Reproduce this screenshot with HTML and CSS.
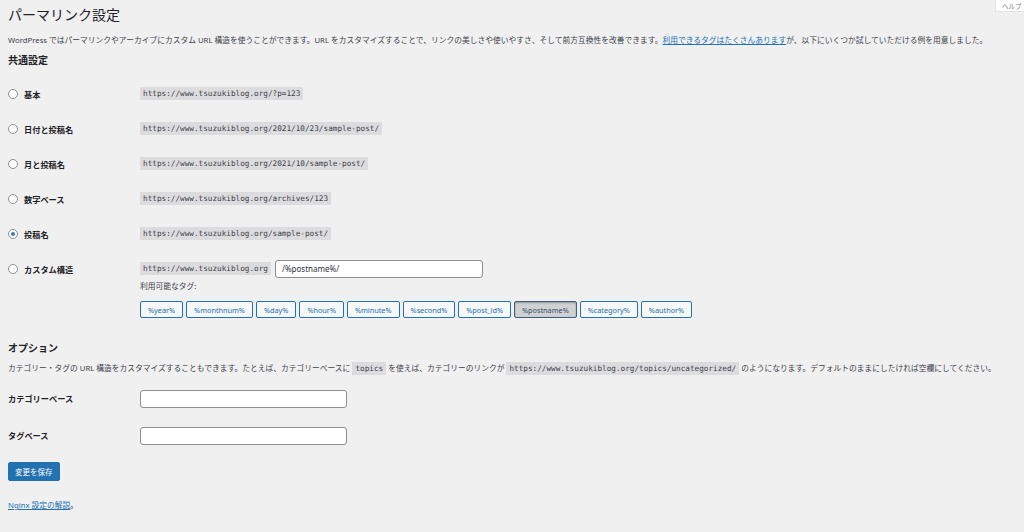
FILE: index.html
```
<!DOCTYPE html>
<html lang="ja">
<head>
    <meta charset="UTF-8">
    <meta name="viewport" content="width=device-width, initial-scale=1.0">
    <title>パーマリンク設定</title>
    <link rel="stylesheet" href="styles.css">
</head>
<body>
    <div id="screen-meta-links">
        <button class="help-tab">ヘルプ</button>
    </div>
    <div class="wrap">
        <h1>パーマリンク設定</h1>
        <p class="intro">WordPress ではパーマリンクやアーカイブにカスタム URL 構造を使うことができます。URL をカスタマイズすることで、リンクの美しさや使いやすさ、そして前方互換性を改善できます。<a href="#">利用できるタグはたくさんあります</a>が、以下にいくつか試していただける例を用意しました。</p>

        <h2>共通設定</h2>
        <div class="form-table">
            <div class="row">
                <label class="choice"><span class="radio"></span>基本</label>
                <div class="field"><code>https://www.tsuzukiblog.org/?p=123</code></div>
            </div>
            <div class="row">
                <label class="choice"><span class="radio"></span>日付と投稿名</label>
                <div class="field"><code>https://www.tsuzukiblog.org/2021/10/23/sample-post/</code></div>
            </div>
            <div class="row">
                <label class="choice"><span class="radio"></span>月と投稿名</label>
                <div class="field"><code>https://www.tsuzukiblog.org/2021/10/sample-post/</code></div>
            </div>
            <div class="row">
                <label class="choice"><span class="radio"></span>数字ベース</label>
                <div class="field"><code>https://www.tsuzukiblog.org/archives/123</code></div>
            </div>
            <div class="row">
                <label class="choice"><span class="radio checked"></span>投稿名</label>
                <div class="field"><code>https://www.tsuzukiblog.org/sample-post/</code></div>
            </div>
            <div class="row">
                <label class="choice"><span class="radio"></span>カスタム構造</label>
                <div class="field">
                    <div class="custom-line">
                        <code>https://www.tsuzukiblog.org</code>
                        <input type="text" class="structure" value="/%postname%/">
                    </div>
                    <p class="tags-label">利用可能なタグ:</p>
                    <ul class="available-tags">
                        <li><button class="tag">%year%</button></li>
                        <li><button class="tag">%monthnum%</button></li>
                        <li><button class="tag">%day%</button></li>
                        <li><button class="tag">%hour%</button></li>
                        <li><button class="tag">%minute%</button></li>
                        <li><button class="tag">%second%</button></li>
                        <li><button class="tag">%post_id%</button></li>
                        <li><button class="tag active">%postname%</button></li>
                        <li><button class="tag">%category%</button></li>
                        <li><button class="tag">%author%</button></li>
                    </ul>
                </div>
            </div>
        </div>

        <h2 class="options-title">オプション</h2>
        <p class="intro options-intro">カテゴリー・タグの URL 構造をカスタマイズすることもできます。たとえば、カテゴリーベースに <code>topics</code> を使えば、カテゴリーのリンクが <code>https://www.tsuzukiblog.org/topics/uncategorized/</code> のようになります。デフォルトのままにしたければ空欄にしてください。</p>
        <div class="form-table options">
            <div class="row">
                <label class="option-label">カテゴリーベース</label>
                <div class="field"><input type="text" class="regular-text"></div>
            </div>
            <div class="row">
                <label class="option-label">タグベース</label>
                <div class="field"><input type="text" class="regular-text"></div>
            </div>
        </div>

        <p class="submit"><button class="button-primary">変更を保存</button></p>
        <p class="nginx"><a href="#">Nginx 設定の解説</a>。</p>
    </div>
</body>
</html>
```

FILE: styles.css
```
body {
    margin: 0;
    background: #f0f0f1;
    color: #3c434a;
    font-family: "Noto Sans", "Noto Sans CJK JP", sans-serif;
    font-size: 7.75px;
}

a {
    color: #2271b1;
}

code {
    font-family: "DejaVu Sans Mono", "Liberation Mono", monospace;
    font-size: 7.7px;
    background: #dcdcde;
    color: #3c434a;
    padding: 2px 3px;
}

/* help tab pinned to the top right corner */
#screen-meta-links {
    position: absolute;
    top: 0;
    right: 0;
}

.help-tab {
    display: block;
    box-sizing: border-box;
    width: 29px;
    height: 12px;
    padding: 0 0 0 6px;
    border: 1px solid #e2e3e4;
    border-top: 0;
    border-right: 0;
    background: #fff;
    color: #787c82;
    font-family: inherit;
    font-size: 6.5px;
    text-align: left;
    overflow: hidden;
    white-space: nowrap;
}

.wrap {
    padding: 0 8px;
}

h1 {
    margin: 0;
    padding-top: 5px;
    font-size: 14px;
    font-weight: 400;
    line-height: 20px;
    color: #1d2327;
}

.intro {
    margin: 9px 0 0;
    line-height: 12px;
    white-space: nowrap;
}

h2 {
    margin: 7px 0 0;
    font-size: 10px;
    font-weight: 700;
    line-height: 14px;
    color: #1d2327;
}

.options-title {
    margin-top: 15px;
}

.options-intro {
    margin-top: 7px;
}

.form-table {
    margin-top: 9px;
}

.row {
    display: grid;
    grid-template-columns: 132px 1fr;
    padding: 8px 0;
}

.options .row {
    padding: 9px 0;
}

.options {
    margin-top: 5px;
}

.choice,
.option-label {
    display: flex;
    align-items: center;
    height: 19px;
    font-size: 8.2px;
    font-weight: 700;
    color: #1d2327;
}

.option-label {
    height: 18px;
}

.radio {
    width: 8px;
    height: 8px;
    margin-right: 6px;
    border: 1px solid #8c8f94;
    border-radius: 50%;
    background: #fff;
    display: flex;
    align-items: center;
    justify-content: center;
}

.radio.checked::after {
    content: "";
    width: 4px;
    height: 4px;
    border-radius: 50%;
    background: #3582c4;
}

.field {
    display: flex;
    flex-direction: column;
    align-items: flex-start;
    justify-content: center;
    min-height: 19px;
}

.custom-line {
    display: flex;
    align-items: center;
    gap: 4px;
    height: 19px;
}

input[type="text"] {
    box-sizing: border-box;
    height: 18px;
    padding: 0 6px;
    border: 1px solid #8c8f94;
    border-radius: 3px;
    background: #fff;
    color: #2c3338;
    font-family: inherit;
    font-size: 8px;
}

.structure {
    width: 208px;
}

.regular-text {
    width: 207px;
}

.tags-label {
    margin: 2px 0 0;
    line-height: 12px;
}

.available-tags {
    display: flex;
    gap: 3px;
    margin: 9px 0 0;
    padding: 0;
    list-style: none;
}

.tag {
    height: 17px;
    padding: 0 7px;
    border: 1px solid #2271b1;
    border-radius: 2px;
    background: #f6f7f7;
    color: #2271b1;
    font-family: inherit;
    font-size: 7.3px;
}

.tag.active {
    background: #d0d1d3;
    border-color: #3f5f7c;
    color: #34506b;
    box-shadow: inset 0 1px 2px rgba(0, 0, 0, 0.3);
}

.submit {
    margin: 8px 0 0;
}

.button-primary {
    height: 19px;
    padding: 0 6px;
    border: 1px solid #2271b1;
    border-radius: 2px;
    background: #2271b1;
    color: #fff;
    font-family: inherit;
    font-size: 7.5px;
}

.nginx {
    margin: 18px 0 0;
    line-height: 12px;
}
```
